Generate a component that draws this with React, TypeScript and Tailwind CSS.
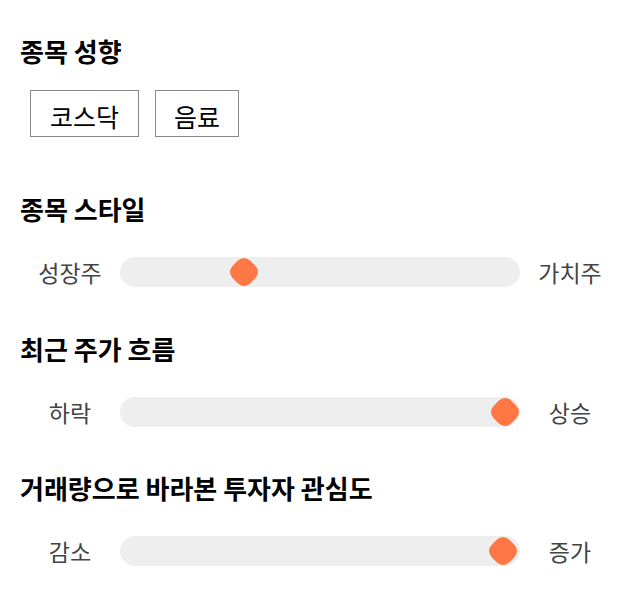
import React from "react";

const font = { fontFamily: '"Noto Sans CJK KR", "Noto Sans", sans-serif' };

function Slider({ left, right, pos }: { left: string; right: string; pos: number }) {
  return (
    <div className="flex items-center h-[30px]">
      <div className="w-[100px] text-center text-[23px] text-[#444]">{left}</div>
      <div className="relative w-[400px] h-[30px] rounded-full bg-[#eeeeee]">
        <div
          className="absolute top-1/2 w-[25px] h-[25px] rounded-[9px] bg-[#ff7744] -translate-x-1/2 -translate-y-1/2 rotate-45"
          style={{ left: `${pos}%` }}
        />
      </div>
      <div className="w-[100px] text-center text-[23px] text-[#444]">{right}</div>
    </div>
  );
}

export default function App() {
  return (
    <div className="w-[640px] h-[606px] bg-white px-5 pt-[33px]" style={font}>
      <h2 className="text-[26px] font-bold text-black leading-[36px]">종목 성향</h2>
      <div className="flex gap-4 mt-[21px] pl-[10px]">
        <button className="h-[47px] px-[19px] pt-[6px] border border-[#888] text-[25px] text-black">코스닥</button>
        <button className="h-[47px] px-[18px] pt-[6px] border border-[#888] text-[25px] text-black">음료</button>
      </div>
      <h2 className="text-[26px] font-bold text-black leading-[36px] mt-[54px]">종목 스타일</h2>
      <div className="mt-[30px]">
        <Slider left="성장주" right="가치주" pos={31} />
      </div>
      <h2 className="text-[26px] font-bold text-black leading-[36px] mt-[44px]">최근 주가 흐름</h2>
      <div className="mt-[30px]">
        <Slider left="하락" right="상승" pos={96.25} />
      </div>
      <h2 className="text-[26px] font-bold text-black leading-[36px] mt-[43px]">거래량으로 바라본 투자자 관심도</h2>
      <div className="mt-[30px]">
        <Slider left="감소" right="증가" pos={95.75} />
      </div>
    </div>
  );
}
